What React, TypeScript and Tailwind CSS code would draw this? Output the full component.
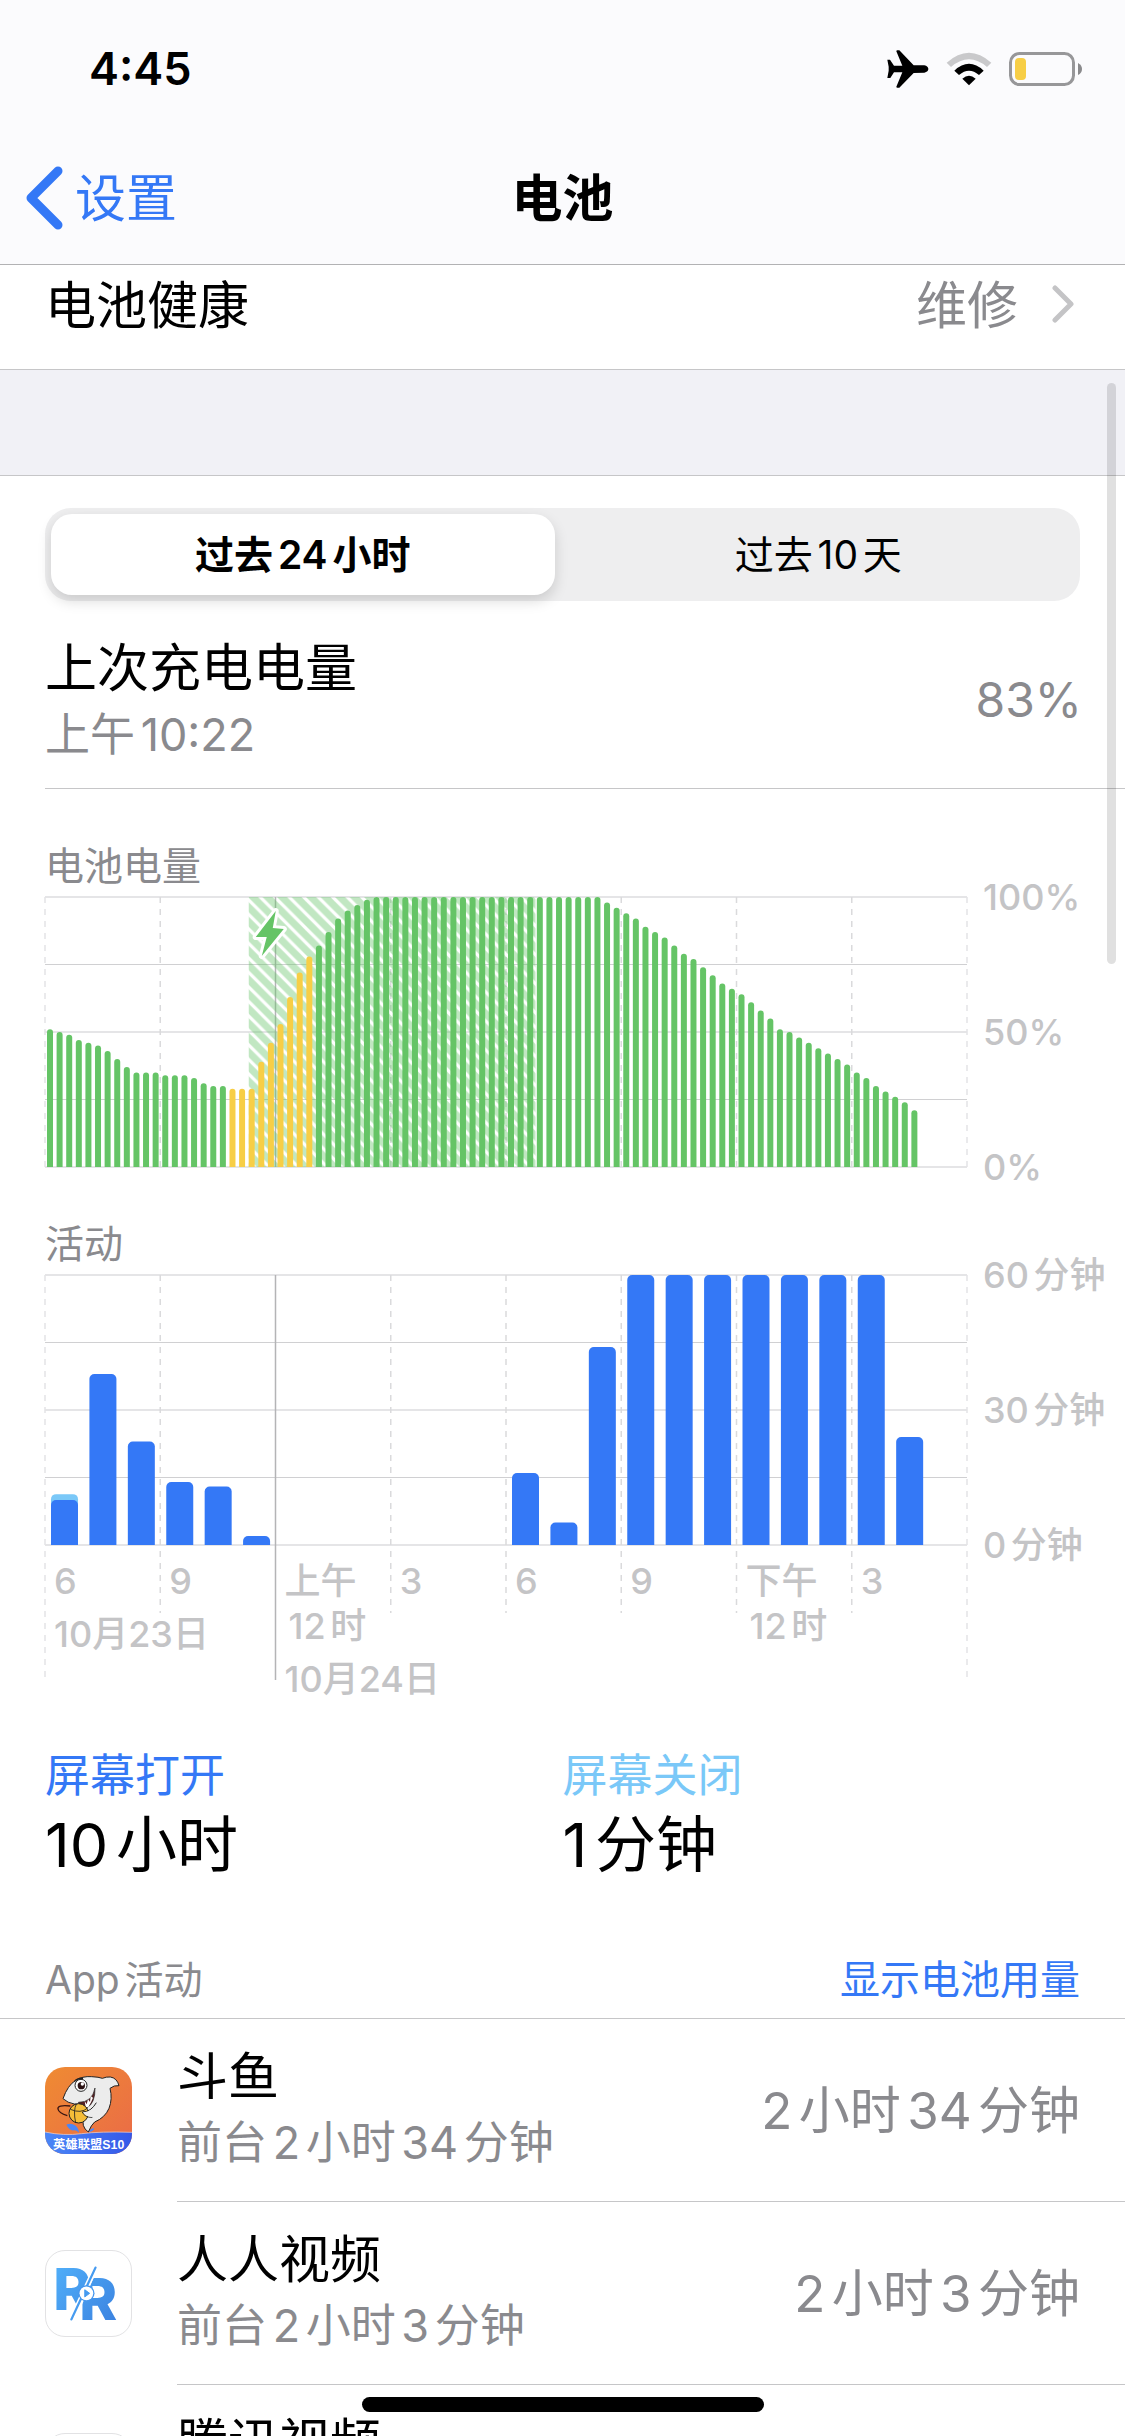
import { useState, type ReactNode } from "react";

/* Battery level, one sample every 15 minutes (96 slots per day) */
const LEVELS = [
  51, 50, 49, 47, 46, 45, 43, 40, 37, 35, 35, 35, 34, 34, 34, 33, 31, 30, 30, 29, 29, 29, 39, 46, 53, 63, 72, 78, 82, 87, 92, 95, 97, 99,
  ...Array<number>(24).fill(100),
  98, 96, 94, 92, 89, 87, 85, 82, 79, 77, 74, 71, 68, 66, 64, 61, 58, 55, 51, 50, 48, 46, 44, 42, 40, 38, 35, 33, 30, 28, 26, 24, 21,
];
const LOW_POWER = { from: 19, to: 27 };

/* Screen-on minutes per hour */
const ACTIVITY = [10, 38, 23, 14, 13, 2, 0, 0, 0, 0, 0, 0, 16, 5, 44, 60, 60, 60, 60, 60, 60, 60, 24, 0];
const SCREEN_OFF: Record<number, number> = { 0: 1.3 };

const PLOT_H = 270;

const TICKS: { label: string; hour?: string; date?: string }[] = [
  { label: "6", date: "10月23日" },
  { label: "9" },
  { label: "上午", hour: "12时", date: "10月24日" },
  { label: "3" },
  { label: "6" },
  { label: "9" },
  { label: "下午", hour: "12时" },
  { label: "3" },
];

const pct = (n: number) => `${n * 100}%`;

function StatusBar() {
  return (
    <div className="flex h-[132px] items-center justify-between pl-[89px] pr-[43px] pt-[6px]">
      <span className="text-[45px] font-semibold leading-[56px]">4:45</span>
      <div className="flex items-center">
        <svg viewBox="80 55 126 114" className="h-[38px] w-[42px]" aria-hidden="true">
          <path d="M81 84h8l12 18h25L108 59q0-3 3-3h6l43 45 32 0q12 3 12 11t-12 11l-32 1-43 44h-6q-3 0-3-3l18-43h-25l-11 17h-9l4-22v-12z" />
        </svg>
        <svg viewBox="258 64 138 102" className="ml-[17px] h-[34px] w-[46px]" aria-hidden="true">
          <path d="M260 96Q327 36 394 96L381 109Q327 63 273 109Z" fill="#c9c9cb" />
          <path d="M283 120Q327 79 371 120L357 133Q327 107 297 133Z" />
          <path d="M307 144Q327 127 347 144L327 164Z" />
        </svg>
        <svg viewBox="0 0 73 34" className="ml-[17px] h-[34px] w-[73px]" aria-hidden="true">
          <rect x="1.5" y="1.5" width="63" height="31" rx="9" fill="none" stroke="#979799" strokeWidth="3" />
          <rect x="6" y="6" width="11" height="22" rx="4" fill="#f7ce46" />
          <path d="M69 11q4 2 4 6t-4 6z" fill="#8a8a8c" />
        </svg>
      </div>
    </div>
  );
}

function NavBar() {
  return (
    <div className="grid h-[132px] grid-cols-3 items-center">
      <a href="#settings" className="flex items-center gap-3 pl-[25px] text-[51px] leading-[64px] text-[#3478f6]">
        <svg viewBox="0 0 38 64" className="h-[64px] w-[38px]" fill="none" stroke="currentColor" strokeWidth="9" strokeLinecap="round" strokeLinejoin="round" aria-hidden="true">
          <path d="M33 5 6 32l27 27" />
        </svg>
        <span className="pt-[2px]">设置</span>
      </a>
      <h1 className="pt-[2px] text-center text-[51px] font-semibold leading-[64px]">电池</h1>
    </div>
  );
}

function RangeSwitch() {
  const [range, setRange] = useState(0);
  return (
    <div className="mx-[45px] mt-8 grid h-[93px] grid-cols-2 rounded-[26px] bg-[#eeeeef] p-[6px] text-[39px] leading-[48px]">
      {["过去24小时", "过去10天"].map((label, i) => (
        <button
          key={label}
          type="button"
          aria-pressed={range === i}
          onClick={() => setRange(i)}
          className={range === i ? "mr-2 rounded-[21px] bg-white font-semibold shadow-[0_6px_14px_rgba(0,0,0,0.15)]" : "rounded-[21px]"}
        >
          {label}
        </button>
      ))}
    </div>
  );
}

/* Horizontal rules plus dashed lines every three hours; midnight is solid */
function GridLines({ innerTo, outerTo }: { innerTo: number; outerTo: number }) {
  return (
    <g>
      {[0, 1, 2, 3, 4].map((i) => (
        <line key={i} x1="0" x2="100%" y1={(i * PLOT_H) / 4} y2={(i * PLOT_H) / 4} stroke={i % 2 ? "#d0d0d2" : "#e5e5e7"} strokeWidth={i % 2 ? 1 : 2} />
      ))}
      {[0, 1, 2, 3, 4, 5, 6, 7, 8].map((i) =>
        i === 2 ? (
          <line key={i} x1="25%" x2="25%" y1="0" y2={outerTo} stroke="#b4b4b6" strokeWidth="1.5" />
        ) : (
          <line key={i} x1={pct(i / 8)} x2={pct(i / 8)} y1="0" y2={i % 8 ? innerTo : outerTo} stroke={i % 8 ? "#dadadc" : "#e4e4e6"} strokeWidth="1.5" strokeDasharray="6 6" />
        ),
      )}
    </g>
  );
}

function Chart({ title, scale, children }: { title: string; scale: string[]; children: ReactNode }) {
  return (
    <section className="pl-[45px] pt-[53px]">
      <h2 className="mb-[7px] text-[39px] leading-[48px] text-[#8a8a8e]">{title}</h2>
      <div className="flex">
        <div className="min-w-0 flex-1">{children}</div>
        <div className="-my-6 flex h-[318px] w-[158px] flex-col justify-between pl-4 text-[36px] font-medium leading-[48px] text-[#c4c4c6]">
          {scale.map((s) => (
            <span key={s} className="whitespace-nowrap">{s}</span>
          ))}
        </div>
      </div>
    </section>
  );
}

function BatteryChart() {
  return (
    <svg className="block h-[270px] w-full overflow-visible" role="img" aria-label="电池电量">
      <defs>
        <pattern id="hatch" width="14.5" height="14.5" patternUnits="userSpaceOnUse">
          <path d="M0 0h10l4.5 4.5v10L0 0zM0 4.5v10h10z" fill="#65c466" fillOpacity="0.4" />
        </pattern>
      </defs>
      <GridLines innerTo={PLOT_H} outerTo={PLOT_H} />
      <rect x="22.1%" y="0" width="31.1%" height={PLOT_H} fill="url(#hatch)" />
      <svg width="100%" height={PLOT_H}>
        <g transform="translate(2 0)">
          {LEVELS.map((v, i) => (
            <rect
              key={i}
              x={pct(i / 96)}
              y={PLOT_H - (v / 100) * PLOT_H}
              width="6"
              height={PLOT_H + 6}
              rx="3"
              fill={i >= LOW_POWER.from && i <= LOW_POWER.to ? "#f7ce46" : "#65c466"}
            />
          ))}
        </g>
      </svg>
      {/* charging bolt */}
      <svg x="22.1%" y="8" width="44" height="60" overflow="visible">
        <path d="M27 6 7 32h11l-5 19 22-27-11-1z" fill="#65c466" stroke="#fff" strokeWidth="6" strokeLinejoin="round" paintOrder="stroke" />
      </svg>
    </svg>
  );
}

function ActivityChart() {
  return (
    <div>
      <svg className="block h-[270px] w-full overflow-visible" role="img" aria-label="活动">
        <GridLines innerTo={338} outerTo={405} />
        <svg width="100%" height={PLOT_H}>
          <g transform="translate(6 0)">
            {ACTIVITY.map((v, i) => {
              const off = SCREEN_OFF[i] ?? 0;
              return (
                <g key={i}>
                  {off > 0 && <rect x={pct(i / 24)} y={PLOT_H - ((v + off) / 60) * PLOT_H} width="27" height={PLOT_H} rx="5" fill="#7ac8f8" />}
                  {v > 0 && <rect x={pct(i / 24)} y={PLOT_H - (v / 60) * PLOT_H} width="27" height={PLOT_H + 6} rx="5" fill="#3478f6" />}
                </g>
              );
            })}
          </g>
        </svg>
      </svg>
      <div className="grid grid-cols-8 pt-[14px] text-[36px] font-medium leading-[45px] text-[#c4c4c6]">
        {TICKS.map((t, i) => (
          <div key={i} className="flex flex-col whitespace-nowrap pl-[9px]">
            <span>{t.label}</span>
            {t.hour && <span className="pl-1">{t.hour}</span>}
            {t.date && <span className="mt-2 [text-autospace:no-autospace]">{t.date}</span>}
          </div>
        ))}
      </div>
    </div>
  );
}

function DouyuIcon() {
  return (
    <svg viewBox="46 51 261 261" className="h-[87px] w-[87px] rounded-[20px]" aria-hidden="true">
      <defs>
        <linearGradient id="dy-bg" x1="0" y1="0" x2="1" y2="1">
          <stop offset="0" stopColor="#ef8b32" />
          <stop offset="1" stopColor="#ea6a48" />
        </linearGradient>
        <linearGradient id="dy-wave" x1="0" y1="0" x2="1" y2="0">
          <stop offset="0" stopColor="#4a86f7" />
          <stop offset="1" stopColor="#3558e8" />
        </linearGradient>
      </defs>
      <rect x="46" y="51" width="261" height="261" fill="url(#dy-bg)" />
      <path d="M46 246q55 12 110 5t151-4v65H46z" fill="url(#dy-wave)" />
      <path d="M46 246q55 12 110 5t151-4" fill="none" stroke="#f7d9cf" strokeWidth="2" />
      <path d="M110 224q14-6 26 2 11 8 12 22-8-8-16-7-12 2-22-17zM178 246q2-10 16-11-2 10-16 11z" fill="#4d86f5" />
      {/* shark */}
      <path d="M100 146q14-40 38-55 20-13 48-11 22 1 32 5 12-5 24-4 20 3 26 26-15-2-27 8 8 32-3 60-12 28-43 41-10 8-19 30-12-8-15-20-2-9 1-19l-8-20 10-30q-14 8-30 5-20-3-34-16z" fill="#ececec" stroke="#222" strokeWidth="3" strokeLinejoin="round" />
      <path d="M146 157q42 0 50-43 1 46-25 60l-16-4z" fill="#5a1f22" stroke="#222" strokeWidth="2" />
      <path d="M165 153l6 10 4-15 6 8 2-17 7 4-6 14-8 14-8 1z" fill="#fff" />
      <circle cx="154" cy="106" r="18" fill="#fff" stroke="#222" strokeWidth="3" />
      <circle cx="155" cy="107" r="11" fill="#2b1113" />
      <circle cx="158" cy="102" r="5" fill="#fff" />
      <path d="M134 95q10-12 26-10" fill="none" stroke="#222" strokeWidth="4" />
      <circle cx="147" cy="190" r="29" fill="#f5bd38" stroke="#222" strokeWidth="3" />
      <path d="M122 178q32 14 52-4M140 162q-10 20-2 56" fill="none" stroke="#222" strokeWidth="2.5" />
      <path d="M158 186q26 0 42-28M158 186q6 16 30 16" fill="none" stroke="#222" strokeWidth="3" />
      <path d="M160 187q24 0 38-22l8 20-20 16q-20-2-26-14z" fill="#ececec" />
      <path d="M122 168q-40-4-37 9 2 12 28 20" fill="none" stroke="#3a1512" strokeWidth="4" />
      <text x="70" y="297" className="font-['Liberation_Sans','Noto_Sans_CJK_SC',sans-serif] text-[37px] font-bold [text-autospace:no-autospace]" fill="#fff">英雄联盟S10</text>
    </svg>
  );
}

function RenrenIcon() {
  return (
    <svg viewBox="46 60 261 261" className="h-[87px] w-[87px] rounded-[20px] border border-[#e2e2e4] bg-white" aria-hidden="true">
      <defs>
        <linearGradient id="rr-bg" gradientUnits="userSpaceOnUse" x1="78" y1="114" x2="270" y2="273">
          <stop offset="0" stopColor="#4fadf8" />
          <stop offset="1" stopColor="#3b82e0" />
        </linearGradient>
        <clipPath id="rr-left"><path d="M46 60h172L104 305H46z" /></clipPath>
        <clipPath id="rr-right"><path d="M224 70 128 290h170V70z" /></clipPath>
      </defs>
      <g className="font-['Inter',sans-serif] text-[176px] font-extrabold" fill="url(#rr-bg)">
        <g clipPath="url(#rr-left)"><text x="68" y="242">R</text></g>
        <g clipPath="url(#rr-right)"><text x="148" y="273">R</text></g>
      </g>
      <path d="M198 111 124 270" stroke="#fff" strokeWidth="16" />
      <path d="M198 111 124 270" stroke="#469bf0" strokeWidth="7" strokeLinecap="round" />
      <circle cx="170" cy="190" r="25" fill="#4596ee" />
      <circle cx="170" cy="190" r="21" fill="#fff" />
      <path d="M165 179v22l15-11z" fill="#469bf0" stroke="#469bf0" strokeWidth="3" strokeLinejoin="round" />
    </svg>
  );
}

function AppRow({ icon, name, detail, total }: { icon: ReactNode; name: string; detail?: string; total?: string }) {
  return (
    <li className="flex h-[183px] shrink-0 items-center pl-[45px]">
      {icon}
      <div className="ml-[45px] flex h-full flex-1 items-center justify-between border-b border-[#c6c6c8] pr-[45px]">
        <div className="flex flex-col gap-[6px] pb-1">
          <span className="text-[51px] leading-[64px]">{name}</span>
          <span className="min-h-[56px] text-[45px] leading-[56px] text-[#8a8a8e]">{detail}</span>
        </div>
        <span className="pt-[2px] text-[51px] leading-[64px] text-[#8a8a8e]">{total}</span>
      </div>
    </li>
  );
}

export default function App() {
  return (
    <div className="relative flex h-screen flex-col overflow-hidden bg-white font-['Inter','Noto_Sans_CJK_SC',sans-serif] text-black [text-autospace:normal]">
      <header className="shrink-0 border-b border-[#b2b2b4] bg-[#fbfbfd]">
        <StatusBar />
        <NavBar />
      </header>

      <main className="min-h-0 flex-1 overflow-hidden">
        <a href="#battery-health" className="flex h-[105px] items-center border-b border-[#c6c6c8] pb-[22px] pl-[45px] pr-[50px] text-[51px] leading-[64px]">
          <span className="flex-1">电池健康</span>
          <span className="text-[#8a8a8e]">维修</span>
          <svg viewBox="0 0 24 38" className="mb-1 ml-[33px] h-[38px] w-6" fill="none" stroke="#c4c4c6" strokeWidth="5" strokeLinecap="round" strokeLinejoin="round" aria-hidden="true">
            <path d="m4 3 16 16L4 35" />
          </svg>
        </a>
        <div className="h-[106px] border-b border-[#c6c6c8] bg-[#f1f1f6]" />

        <RangeSwitch />

        <div className="ml-[45px] flex items-center justify-between border-b border-[#c6c6c8] pb-[25px] pr-[43px] pt-9">
          <div className="flex flex-col gap-[6px]">
            <span className="text-[52px] leading-[64px]">上次充电电量</span>
            <span className="text-[45px] leading-[56px] text-[#8a8a8e]">上午10:22</span>
          </div>
          <span className="text-[48px] leading-[64px] text-[#8a8a8e]">83%</span>
        </div>

        <Chart title="电池电量" scale={["100%", "50%", "0%"]}>
          <BatteryChart />
        </Chart>
        <Chart title="活动" scale={["60分钟", "30分钟", "0分钟"]}>
          <ActivityChart />
        </Chart>

        <dl className="grid grid-cols-2 px-[45px] pt-[46px]">
          <div className="flex flex-col gap-[5px]">
            <dt className="text-[45px] leading-[56px] text-[#3478f6]">屏幕打开</dt>
            <dd className="text-[61px] leading-[72px]">10小时</dd>
          </div>
          <div className="flex flex-col gap-[5px]">
            <dt className="text-[45px] leading-[56px] text-[#7ac8f8]">屏幕关闭</dt>
            <dd className="text-[61px] leading-[72px]">1分钟</dd>
          </div>
        </dl>

        <div className="flex items-center justify-between border-b border-[#c6c6c8] px-[45px] pb-[14px] pt-[75px] text-[39px] leading-[48px]">
          <h2 className="text-[#8a8a8e]">App活动</h2>
          <button type="button" className="text-[40px] text-[#3478f6]">显示电池用量</button>
        </div>

        <ul>
          <AppRow icon={<DouyuIcon />} name="斗鱼" detail="前台2小时34分钟" total="2小时34分钟" />
          <AppRow icon={<RenrenIcon />} name="人人视频" detail="前台2小时3分钟" total="2小时3分钟" />
          <AppRow icon={<div className="h-[87px] w-[87px] rounded-[20px] border border-[#e2e2e4] bg-white" />} name="腾讯视频" />
        </ul>
      </main>

      {/* scroll thumb and home indicator float over the content */}
      <div className="absolute right-[9px] top-[383px] h-[581px] w-[9px] rounded-full bg-black/12" />
      <div className="absolute bottom-6 left-1/2 h-[15px] w-[402px] -translate-x-1/2 rounded-full bg-black" />
    </div>
  );
}
